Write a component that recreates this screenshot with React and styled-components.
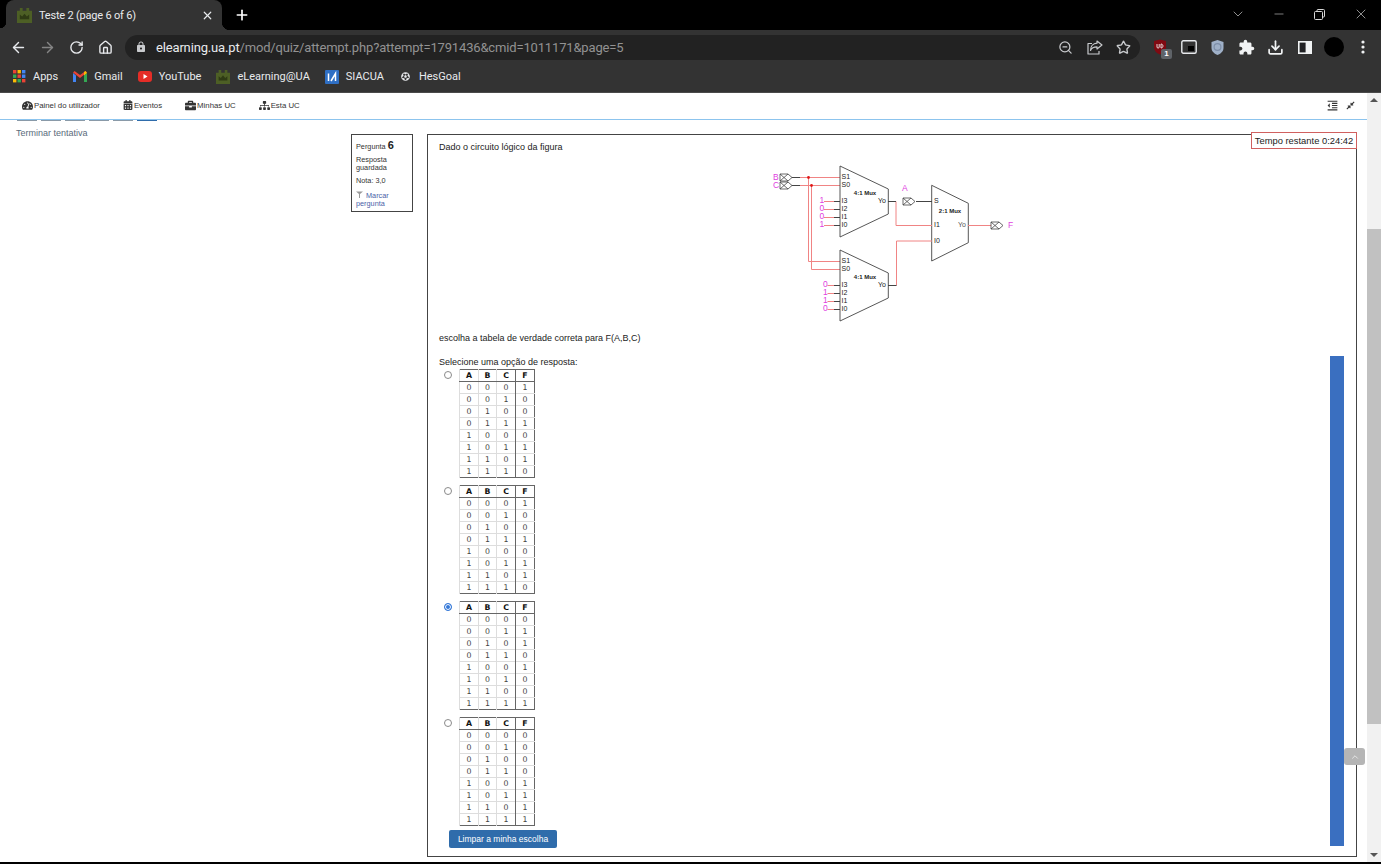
import React from "react";
import styled, { createGlobalStyle } from "styled-components";
import { ArrowLeft, ArrowRight, RotateCw, Home, ZoomOut, Star, Download, ChevronDown, Minus, X, Plus, ChevronUp } from "lucide-react";
import { MdExtension, MdLock, MdFormatIndentDecrease } from "react-icons/md";
import { FaTachometerAlt, FaCalendarAlt, FaBriefcase, FaSitemap, FaCompressAlt, FaFutbol } from "react-icons/fa";

const CHROME = "#333333";

const GlobalStyle = createGlobalStyle`
  html, body { margin: 0; padding: 0; height: 100%; overflow: hidden; background: #000; }
  body { font-family: "Liberation Sans", Arial, sans-serif; }
  * { box-sizing: border-box; }
`;

const Shell = styled.div`
  display: flex;
  flex-direction: column;
  width: 1381px;
  height: 864px;
  background: #000;
`;

/* tab strip */
const TabStrip = styled.div`
  display: flex;
  align-items: flex-end;
  height: 30px;
  background: #000;
  padding-left: 6px;
  flex-shrink: 0;
`;

const Tab = styled.div`
  position: relative;
  display: flex;
  align-items: center;
  width: 216px;
  height: 30px;
  padding: 0 8px 0 11px;
  background: ${CHROME};
  border-radius: 8px 8px 0 0;
  color: #e8eaed;
  font: 11px Roboto, sans-serif;
  letter-spacing: -0.2px;
  &::before, &::after {
    content: "";
    position: absolute;
    bottom: 0;
    width: 8px;
    height: 8px;
  }
  &::before { left: -6px; width: 6px; background: radial-gradient(circle at 0 0, #000 6px, ${CHROME} 6.5px); }
  &::after { right: -8px; background: radial-gradient(circle at 100% 0, #000 8px, ${CHROME} 8.5px); }
`;

const TabTitle = styled.span`
  flex: 1;
  margin-left: 7px;
  white-space: nowrap;
`;

const NewTab = styled.div`
  display: flex;
  align-items: center;
  margin: 0 0 7px 12px;
  color: #fff;
`;

const WindowControls = styled.div`
  display: flex;
  align-items: center;
  margin-left: auto;
  align-self: flex-start;
  height: 28px;
  color: #d6d6d6;
`;

const WindowButton = styled.div`
  display: flex;
  justify-content: center;
  width: 41px;
`;

/* toolbar */
const Toolbar = styled.div`
  display: flex;
  align-items: center;
  height: 31px;
  padding: 3px 0 0 9px;
  background: ${CHROME};
  flex-shrink: 0;
`;

const NavIcon = styled.div`
  display: flex;
  justify-content: center;
  width: 18px;
  margin-right: 11px;
  color: ${(p) => (p.$dim ? "#858585" : "#e8eaed")};
`;

const Omnibox = styled.div`
  display: flex;
  align-items: center;
  width: 1015px;
  height: 25px;
  padding: 0 2px 0 10px;
  border-radius: 13px;
  background: #222222;
  color: #c8cacd;
`;

const Url = styled.div`
  flex: 1;
  margin-left: 9px;
  font: 13px Roboto, sans-serif;
  letter-spacing: -0.16px;
  color: #929292;
  white-space: nowrap;
  b { font-weight: 400; color: #e8eaed; }
`;

const OmniIcon = styled.div`
  display: flex;
  justify-content: center;
  width: 29px;
`;

const ExtRow = styled.div`
  display: flex;
  align-items: center;
  margin-left: 5px;
`;

const ExtIcon = styled.div`
  position: relative;
  display: flex;
  justify-content: center;
  align-items: center;
  width: 29px;
  height: 24px;
  color: #f1f3f4;
`;

const ExtBadge = styled.span`
  position: absolute;
  right: 2px;
  bottom: 0;
  width: 11px;
  height: 10px;
  border-radius: 2px;
  background: #5f6368;
  color: #fff;
  font: bold 8px/10px "Liberation Sans", sans-serif;
  text-align: center;
`;

const Avatar = styled.div`
  width: 20px;
  height: 20px;
  border-radius: 50%;
  background: #000;
`;

/* bookmarks */
const BookmarkBar = styled.div`
  display: flex;
  align-items: center;
  gap: 15px;
  height: 32px;
  padding-left: 13px;
  background: ${CHROME};
  border-bottom: 1px solid #4a4a4a;
  flex-shrink: 0;
`;

const Bookmark = styled.div`
  display: flex;
  align-items: center;
  gap: 7px;
  color: #e8eaed;
  font: 11px Roboto, sans-serif;
  white-space: nowrap;
`;

/* page */
const PageRow = styled.div`
  position: relative;
  display: flex;
  height: 769px;
  background: #fff;
  flex-shrink: 0;
`;

const Page = styled.div`
  flex: 1;
  min-width: 0;
`;

const NavBar = styled.div`
  display: flex;
  align-items: center;
  height: 27px;
  padding: 0 12px 2px 22px;
  border-bottom: 1px solid #8cc4ee;
`;

const NavLink = styled.a`
  display: flex;
  align-items: center;
  gap: 1px;
  margin-right: 23px;
  color: #333;
  font-size: 7.8px;
  white-space: nowrap;
`;

const NavTools = styled.div`
  display: flex;
  align-items: center;
  gap: 7px;
  margin-left: auto;
  color: #333;
`;

const Main = styled.div`
  display: flex;
  align-items: flex-start;
  padding-left: 16px;
`;

const LeftColumn = styled.div`
  width: 335px;
  flex-shrink: 0;
`;

const Pager = styled.div`
  display: flex;
  gap: 4px;
  height: 1px;
  margin-left: 1px;
`;

const PagerBit = styled.span`
  width: 20px;
  height: 1px;
  background: ${(p) => (p.$active ? "#2f6cab" : "#8a9aa8")};
`;

const FinishLink = styled.a`
  display: block;
  margin-top: 7px;
  color: #5a6b7b;
  font-size: 9px;
`;

const InfoBox = styled.div`
  width: 62px;
  height: 78px;
  margin-top: 14px;
  flex-shrink: 0;
  padding: 6px 4px;
  border: 1px solid #444;
  color: #333;
  font-size: 7.3px;
  line-height: 8px;
`;

const InfoLine = styled.div`
  margin-bottom: ${(p) => p.$gap || 5}px;
  b { font-size: 11px; color: #222; }
`;

const FlagLink = styled.div`
  color: #4a5fa8;
  svg { margin-right: 3px; color: #999; }
`;

const QuestionBox = styled.div`
  width: 930px;
  height: 723px;
  margin: 14px 0 0 14px;
  flex-shrink: 0;
  padding: 6px 12px 0 11px;
  border: 1px solid #444;
  color: #222;
  font-size: 9px;
`;

const Prompt = styled.p`
  margin: 0;
  line-height: 12px;
`;

const Figure = styled.svg`
  display: block;
  width: 270px;
  height: 170px;
  margin: 8px 0 1px 321px;
`;

const AnswerRow = styled.div`
  display: flex;
  margin-top: 12px;
`;

const Answers = styled.div`
  flex: 1;
`;

const ScrollBlock = styled.div`
  width: 14px;
  height: 490px;
  background: #3a6fc0;
`;

const OptionList = styled.div`
  display: flex;
  flex-direction: column;
  gap: 7px;
  margin-top: 1px;
`;

const Option = styled.div`
  display: flex;
  align-items: flex-start;
  padding-left: 5px;
`;

const Radio = styled.span`
  width: 8px;
  height: 8px;
  margin: 2px 7px 0 0;
  border-radius: 50%;
  border: 1px solid ${(p) => (p.$on ? "#3478d8" : "#8a8a8a")};
  background: ${(p) => (p.$on ? "#3478d8" : "#fff")};
  box-shadow: ${(p) => (p.$on ? "inset 0 0 0 1px #fff" : "none")};
`;

const Truth = styled.table`
  width: 75px;
  height: 108px;
  table-layout: fixed;
  border-collapse: collapse;
  border: 1px solid #666;
  font: 7.8px "DejaVu Sans", sans-serif;
  color: #444;
  text-align: center;
`;

const Head = styled.th`
  height: 12px;
  padding: 0;
  color: #111;
  font-weight: 700;
  border-bottom: 1px solid #666;
  border-left: 1px solid ${(p) => (p.$out ? "#666" : "#ddd")};
`;

const Cell = styled.td`
  height: 12px;
  padding: 0;
  border-top: 1px solid #ddd;
  border-left: 1px solid ${(p) => (p.$out ? "#666" : "#ddd")};
`;

const ClearButton = styled.button`
  display: block;
  width: 108px;
  height: 18px;
  margin: 4px 0 0 10px;
  padding: 0;
  border: 0;
  border-radius: 2px;
  background: #2f6cab;
  color: #fff;
  font: 8.5px "Liberation Sans", sans-serif;
`;

const Timer = styled.div`
  position: absolute;
  top: 39px;
  left: 1251px;
  width: 106px;
  height: 17px;
  border: 1px solid #d0605f;
  background: #fff;
  color: #222;
  font-size: 9.4px;
  line-height: 15px;
  text-align: center;
  white-space: nowrap;
`;

const ToTop = styled.div`
  position: absolute;
  top: 655px;
  left: 1344px;
  width: 21px;
  height: 17px;
  display: flex;
  align-items: center;
  justify-content: center;
  border-radius: 3px;
  background: #b5b5b5;
  color: #eee;
`;

const Scrollbar = styled.div`
  display: flex;
  flex-direction: column;
  align-items: center;
  width: 14px;
  background: #f1f1f1;
  flex-shrink: 0;
`;

const ScrollArrow = styled.span`
  width: 0;
  height: 0;
  margin: ${(p) => (p.$down ? "auto 0 5px" : "5px 0 0")};
  border-left: 4px solid transparent;
  border-right: 4px solid transparent;
  ${(p) => (p.$down ? "border-top: 4px solid #555;" : "border-bottom: 4px solid #555;")}
`;

const ScrollThumb = styled.div`
  width: 14px;
  height: 495px;
  margin-top: 127px;
  background: #c1c1c1;
`;

/* circuit svg parts */
const PINK = "#f08484";
const MAGENTA = "#e040e0";

const Label = styled.text`
  font-family: "Liberation Sans", sans-serif;
  font-size: ${(p) => p.$size || 7}px;
  font-weight: ${(p) => (p.$bold ? 700 : 400)};
  fill: ${(p) => p.$fill || "#222"};
  dominant-baseline: middle;
`;

const Wire = ({ d, dark }) => <path d={d} fill="none" stroke={dark ? "#444" : PINK} strokeWidth="1" />;

const Port = ({ x, y }) => (
  <g fill="#fff" stroke="#444" strokeWidth="0.8">
    <path d={`M${x} ${y - 3.5} h8 l4 3.5 l-4 3.5 h-8 z`} />
    <path d={`M${x} ${y - 3.5} l8 7 M${x} ${y + 3.5} l8 -7`} fill="none" />
  </g>
);

const Mux = ({ y, vals }) => (
  <g>
    <path d={`M840 ${y} L888.3 ${y + 23} V${y + 48} L840 ${y + 71} Z`} fill="#fff" stroke="#444" strokeWidth="0.9" />
    <Label x="865" y={y + 27} $bold $size={6} textAnchor="middle">4:1 Mux</Label>
    <Label x="878" y={y + 35}>Yo</Label>
    <Label x="841.5" y={y + 11}>S1</Label>
    <Label x="841.5" y={y + 19}>S0</Label>
    {["I3", "I2", "I1", "I0"].map((name, i) => (
      <g key={name}>
        <Label x="841.5" y={y + 35 + i * 8}>{name}</Label>
        <Wire d={`M${vals.wire} ${y + 35.5 + i * 8} H834`} />
        <Wire d={`M834 ${y + 35.5 + i * 8} H840`} dark />
        <Label x={vals.x} y={y + 35 + i * 8} $fill={MAGENTA} $size={8.5}>{vals.v[i]}</Label>
      </g>
    ))}
  </g>
);

const Circuit = () => (
  <Figure viewBox="760 160 270 170">
    <Wire d="M792 176.5 H840 M792 184.5 H840" />
    <Wire d="M792 176.5 H800 M792 184.5 H800" dark />
    <Wire d="M808.5 176.5 V260.5 H840 M811.5 184.5 V268.5 H840" />
    <circle cx="808.5" cy="176.5" r="1.4" fill="#e01818" />
    <circle cx="811.5" cy="184.5" r="1.4" fill="#e01818" />
    <Port x="780" y={176.5} />
    <Port x="780" y={184.5} />
    <Label x="773" y="176.5" $fill={MAGENTA} $size={8.5}>B</Label>
    <Label x="773" y="184.5" $fill={MAGENTA} $size={8.5}>C</Label>
    <Mux y={165} vals={{ x: 819.5, wire: 824, v: ["1", "0", "0", "1"] }} />
    <Mux y={249} vals={{ x: 823, wire: 827.5, v: ["0", "1", "1", "0"] }} />
    <path d="M931.7 184.3 L968.3 202.3 V241.7 L931.7 260 Z" fill="#fff" stroke="#444" strokeWidth="0.9" />
    <Label x="950" y="210" $bold $size={6} textAnchor="middle">2:1 Mux</Label>
    <Label x="934" y="200">S</Label>
    <Label x="934" y="224.5">I1</Label>
    <Label x="934" y="240">I0</Label>
    <Label x="958" y="224.5" $fill="#555">Yo</Label>
    <Wire d="M896 200.5 V224.5 H932" />
    <Wire d="M888 200.5 H896" dark />
    <Wire d="M896.5 284.5 V240 H932" />
    <Wire d="M888 284.5 H896.5" dark />
    <Wire d="M916 200.5 H932" dark />
    <Wire d="M968 224.5 H992" />
    <Port x="903" y={200.5} />
    <Port x="991" y={224.5} />
    <Label x="902" y="188" $fill={MAGENTA} $size={8.5}>A</Label>
    <Label x="1008" y="224.5" $fill={MAGENTA} $size={8.5}>F</Label>
  </Figure>
);

/* small drawn logos */
const Crown = ({ size = 15 }) => (
  <svg width={size} height={size} viewBox="0 0 16 16">
    <rect width="16" height="16" fill="#4d5f25" />
    <path d="M0 0h3v3h-3zM6 0h4v3h-4zM13 0h3v3h-3z" fill={CHROME} />
    <path d="M3 12 V7 l2.5 2 L8 6 l2.5 3 L13 7 v5 z" fill="#2f3b14" />
  </svg>
);

const AppsGrid = () => {
  const colors = ["#ea4335", "#fbbc04", "#4285f4", "#34a853", "#ea4335", "#4285f4", "#fbbc04", "#34a853", "#ea4335"];
  return (
    <svg width="13" height="13" viewBox="0 0 13 13">
      {colors.map((c, i) => (
        <rect key={i} x={(i % 3) * 4.5} y={Math.floor(i / 3) * 4.5} width="3.4" height="3.4" fill={c} />
      ))}
    </svg>
  );
};

const GmailIcon = () => (
  <svg width="14" height="11" viewBox="0 0 14 11">
    <path d="M0 2 V11 H3 V4.5 Z" fill="#4285f4" />
    <path d="M14 2 V11 H11 V4.5 Z" fill="#34a853" />
    <path d="M0 1.5 L7 7 L14 1.5 L12.5 0 L7 4 L1.5 0 Z" fill="#ea4335" />
    <path d="M11 4.5 L14 2 L12.5 0 L11 1 Z" fill="#fbbc04" />
  </svg>
);

const YouTubeIcon = () => (
  <svg width="14" height="11" viewBox="0 0 14 11">
    <rect width="14" height="11" rx="3" fill="#e52d27" />
    <path d="M5.5 3 L9.5 5.5 L5.5 8 Z" fill="#fff" />
  </svg>
);

const SiacuaIcon = () => (
  <svg width="14" height="14" viewBox="0 0 14 14">
    <rect width="14" height="14" rx="1" fill="#2f6fc4" />
    <path d="M3.5 11 V3.5 M6 11 L10.5 3.5 V11" fill="none" stroke="#fff" strokeWidth="1.5" />
  </svg>
);

const ShareIcon = () => (
  <svg width="16" height="15" viewBox="0 0 16 15" fill="none" stroke="#c8cacd" strokeWidth="1.2" strokeLinejoin="round">
    <path d="M10 1 L15 5 L10 9 V6.8 C6.5 6.8 4.5 8 3.5 10.5 C3.5 6.5 6 3.4 10 3.2 Z" />
    <path d="M5 3.5 H1 V14 H12 V11" />
  </svg>
);

const UblockIcon = () => (
  <svg width="14" height="16" viewBox="0 0 14 16">
    <path d="M1 2 L7 0.5 L13 2 V8 C13 12 10 14.5 7 15.5 C4 14.5 1 12 1 8 Z" fill="#800a12" />
    <path d="M4 5 V8 C4 9.5 6.2 9.5 6.2 8 V5 M8 5 V9 C10.6 9 10.6 5 8 5" fill="none" stroke="#eee" strokeWidth="0.9" />
  </svg>
);

const PipIcon = () => (
  <svg width="16" height="14" viewBox="0 0 16 14">
    <rect x="0.8" y="0.8" width="14.4" height="12.4" rx="1.5" fill={CHROME} stroke="#e8eaed" strokeWidth="1.4" />
    <rect x="7" y="6" width="6" height="5" fill="#000" />
  </svg>
);

const ShieldIcon = () => (
  <svg width="13" height="15" viewBox="0 0 13 15">
    <path d="M0.5 2 L6.5 0 L12.5 2 V8 C12.5 11.5 9.5 13.8 6.5 15 C3.5 13.8 0.5 11.5 0.5 8 Z" fill="#9fb0c8" />
    <circle cx="6.5" cy="7" r="3.4" fill="none" stroke="#7d8ea8" strokeWidth="1.2" />
  </svg>
);

const SideIcon = () => (
  <svg width="14" height="13" viewBox="0 0 14 13">
    <rect width="14" height="13" fill="#f1f3f4" />
    <rect x="1.6" y="1.6" width="6" height="9.8" fill="#202124" />
  </svg>
);

const RestoreIcon = () => (
  <svg width="11" height="11" viewBox="0 0 11 11" fill="none" stroke="#d6d6d6">
    <rect x="0.5" y="2.5" width="8" height="8" rx="1" />
    <path d="M3 2.5 V1.5 a1 1 0 0 1 1 -1 h5.5 a1 1 0 0 1 1 1 V7 a1 1 0 0 1 -1 1 h-1" />
  </svg>
);

const FlagIcon = () => (
  <svg width="7" height="7" viewBox="0 0 7 7">
    <path d="M0 0.5 H7 L4 3 V7 H3 V3 Z" fill="#999" />
  </svg>
);

const options = [
  { f: [1, 0, 0, 1, 0, 1, 1, 0] },
  { f: [1, 0, 0, 1, 0, 1, 1, 0] },
  { f: [0, 1, 1, 0, 1, 0, 0, 1], on: true },
  { f: [0, 0, 0, 0, 1, 1, 1, 1] },
];

const TruthTable = ({ f }) => (
  <Truth>
    <colgroup>
      <col style={{ width: 19 }} />
      <col style={{ width: 18 }} />
      <col style={{ width: 19 }} />
      <col style={{ width: 19 }} />
    </colgroup>
    <thead>
      <tr>
        <Head>A</Head>
        <Head>B</Head>
        <Head>C</Head>
        <Head $out>F</Head>
      </tr>
    </thead>
    <tbody>
      {f.map((out, i) => (
        <tr key={i}>
          <Cell>{(i >> 2) & 1}</Cell>
          <Cell>{(i >> 1) & 1}</Cell>
          <Cell>{i & 1}</Cell>
          <Cell $out>{out}</Cell>
        </tr>
      ))}
    </tbody>
  </Truth>
);

export default function App() {
  return (
    <Shell>
      <GlobalStyle />
      <TabStrip>
        <Tab>
          <Crown />
          <TabTitle>Teste 2 (page 6 of 6)</TabTitle>
          <X size={13} strokeWidth={2.2} />
        </Tab>
        <NewTab><Plus size={16} strokeWidth={2.5} /></NewTab>
        <WindowControls>
          <WindowButton><ChevronDown size={16} strokeWidth={1} /></WindowButton>
          <WindowButton><Minus size={14} strokeWidth={1} /></WindowButton>
          <WindowButton><RestoreIcon /></WindowButton>
          <WindowButton><X size={16} strokeWidth={1} /></WindowButton>
        </WindowControls>
      </TabStrip>

      <Toolbar>
        <NavIcon><ArrowLeft size={17} /></NavIcon>
        <NavIcon $dim><ArrowRight size={17} /></NavIcon>
        <NavIcon><RotateCw size={15} strokeWidth={2.2} /></NavIcon>
        <NavIcon><Home size={15} strokeWidth={2.2} /></NavIcon>
        <Omnibox>
          <MdLock size={12} />
          <Url><b>elearning.ua.pt</b>/mod/quiz/attempt.php?attempt=1791436&amp;cmid=1011171&amp;page=5</Url>
          <OmniIcon><ZoomOut size={15} /></OmniIcon>
          <OmniIcon><ShareIcon /></OmniIcon>
          <OmniIcon><Star size={15} strokeWidth={2.2} /></OmniIcon>
        </Omnibox>
        <ExtRow>
          <ExtIcon><UblockIcon /><ExtBadge>1</ExtBadge></ExtIcon>
          <ExtIcon><PipIcon /></ExtIcon>
          <ExtIcon><ShieldIcon /></ExtIcon>
          <ExtIcon><MdExtension size={17} /></ExtIcon>
          <ExtIcon><Download size={17} strokeWidth={2.4} /></ExtIcon>
          <ExtIcon><SideIcon /></ExtIcon>
          <ExtIcon><Avatar /></ExtIcon>
          <ExtIcon>
            <svg width="4" height="14" viewBox="0 0 4 14" fill="#f1f3f4">
              <circle cx="2" cy="2" r="1.6" /><circle cx="2" cy="7" r="1.6" /><circle cx="2" cy="12" r="1.6" />
            </svg>
          </ExtIcon>
        </ExtRow>
      </Toolbar>

      <BookmarkBar>
        <Bookmark><AppsGrid />Apps</Bookmark>
        <Bookmark><GmailIcon />Gmail</Bookmark>
        <Bookmark><YouTubeIcon />YouTube</Bookmark>
        <Bookmark><Crown size={14} />eLearning@UA</Bookmark>
        <Bookmark><SiacuaIcon />SIACUA</Bookmark>
        <Bookmark><FaFutbol size={9} style={{ margin: "0 2px" }} />HesGoal</Bookmark>
      </BookmarkBar>

      <PageRow>
        <Page>
          <NavBar>
            <NavLink><FaTachometerAlt size={11} />Painel do utilizador</NavLink>
            <NavLink><FaCalendarAlt size={10} />Eventos</NavLink>
            <NavLink><FaBriefcase size={11} />Minhas UC</NavLink>
            <NavLink><FaSitemap size={11} />Esta UC</NavLink>
            <NavTools>
              <MdFormatIndentDecrease size={13} />
              <FaCompressAlt size={9} />
            </NavTools>
          </NavBar>
          <Main>
            <LeftColumn>
              <Pager>
                {[0, 1, 2, 3, 4, 5].map((n) => <PagerBit key={n} $active={n === 5} />)}
              </Pager>
              <FinishLink>Terminar tentativa</FinishLink>
            </LeftColumn>
            <InfoBox>
              <InfoLine>Pergunta <b>6</b></InfoLine>
              <InfoLine>Resposta<br />guardada</InfoLine>
              <InfoLine $gap={6}>Nota: 3,0</InfoLine>
              <FlagLink><FlagIcon />Marcar<br />pergunta</FlagLink>
            </InfoBox>
            <QuestionBox>
              <Prompt>Dado o circuito lógico da figura</Prompt>
              <Circuit />
              <Prompt>escolha a tabela de verdade correta para F(A,B,C)</Prompt>
              <AnswerRow>
                <Answers>
                  <Prompt>Selecione uma opção de resposta:</Prompt>
                  <OptionList>
                    {options.map((o, i) => (
                      <Option key={i}>
                        <Radio $on={o.on} />
                        <TruthTable f={o.f} />
                      </Option>
                    ))}
                  </OptionList>
                  <ClearButton>Limpar a minha escolha</ClearButton>
                </Answers>
                <ScrollBlock />
              </AnswerRow>
            </QuestionBox>
          </Main>
        </Page>
        <Timer>Tempo restante 0:24:42</Timer>
        <ToTop><ChevronUp size={10} /></ToTop>
        <Scrollbar>
          <ScrollArrow />
          <ScrollThumb />
          <ScrollArrow $down />
        </Scrollbar>
      </PageRow>
    </Shell>
  );
}
